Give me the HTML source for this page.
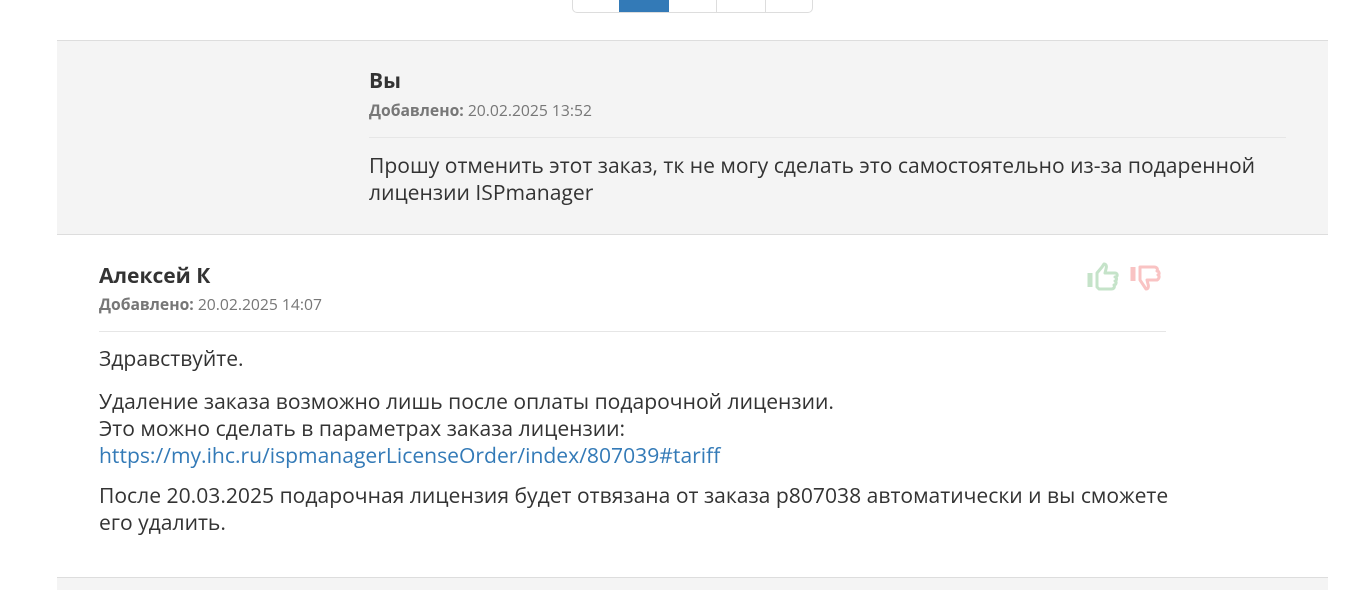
<!DOCTYPE html>
<html><head><meta charset="utf-8"><style>
body{margin:0;width:1348px;height:589px;background:#fff;font-family:"Open Sans","Liberation Sans",sans-serif;color:#333;position:relative;overflow:hidden}
.abs{position:absolute}
.pag{left:572px;top:-5px;width:239px;height:16px;border:1px solid #ddd;border-radius:0 0 5px 5px}
.blue{left:619px;top:0;width:50px;height:12px;background:#337ab7}
.div{top:0;width:1px;height:12px;background:#ddd}
.grey{left:57px;top:40px;width:1271px;height:193px;background:#f4f4f4;border-top:1px solid #ddd;border-bottom:1px solid #ddd}
.name{font-weight:bold;font-size:21px;color:#333}
.date{font-size:15.7px;color:#777}
.date b{color:#777}
.hr{height:1px;background:#e6e6e6}
.txt{font-size:21.1px;line-height:27px;color:#333}
a{color:#337ab7;text-decoration:none}
</style></head><body>
<div class="abs pag"></div>
<div class="abs blue"></div>
<div class="abs div" style="left:716px"></div>
<div class="abs div" style="left:765px"></div>
<div class="abs grey"></div>
<div class="abs name" style="left:369px;top:67px">Вы</div>
<div class="abs date" style="left:369px;top:99px"><b>Добавлено:</b> 20.02.2025 13:52</div>
<div class="abs hr" style="left:369px;top:137px;width:917px"></div>
<div class="abs txt" style="left:369px;top:152px;width:920px">Прошу отменить этот заказ, тк не могу сделать это самостоятельно из-за подаренной лицензии ISPmanager</div>
<div class="abs name" style="left:99px;top:262px">Алексей К</div>
<div class="abs date" style="left:99px;top:293px"><b>Добавлено:</b> 20.02.2025 14:07</div>
<svg class="abs" style="left:1086px;top:262px" width="80" height="32" viewBox="0 0 80 32">
<g fill="none" stroke-width="3" stroke-linejoin="round">
<path d="M4 11v14" stroke="#c5e3c9" stroke-width="5"/>
<path d="M11 11l5-6 2-3c2 0 3 2 2 5l-1 4h10c3 0 3 4 0 4 2 0 2 4 0 4 2 1 1 4-1 4 1 2 0 4-3 4H13l-2-2z" stroke="#c5e3c9"/>
<path d="M47 5v14" stroke="#f9c3c3" stroke-width="5"/>
<path d="M54 5h14c3 0 4 2 3 4 2 0 3 3 1 4 2 1 1 4-1 5h-10l1 4c1 3 0 5-2 5l-2-3-4-6z" stroke="#f9c3c3"/>
</g></svg>
<div class="abs hr" style="left:99px;top:331px;width:1067px"></div>
<div class="abs txt" style="left:99px;top:345px">Здравствуйте.</div>
<div class="abs txt" style="left:99px;top:388px;width:1080px">Удаление заказа возможно лишь после оплаты подарочной лицензии.<br>Это можно сделать в параметрах заказа лицензии:<br><a>https://my.ihc.ru/ispmanagerLicenseOrder/index/807039#tariff</a></div>
<div class="abs txt" style="left:99px;top:482px;width:1075px">После 20.03.2025 подарочная лицензия будет отвязана от заказа p807038 автоматически и вы сможете его удалить.</div>
<div class="abs" style="left:57px;top:577px;width:1271px;height:12px;background:#f4f4f4;border-top:1px solid #ddd"></div>
</body></html>
